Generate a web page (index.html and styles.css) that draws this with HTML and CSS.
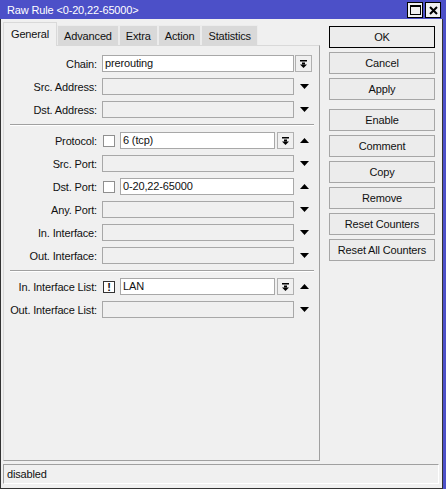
FILE: index.html
```html
<!DOCTYPE html>
<html lang="en">
<head>
    <meta charset="UTF-8">
    <title>Raw Rule</title>
    <link rel="stylesheet" href="styles.css">
</head>
<body>

    <div class="window">
        <!-- Title bar -->
        <div class="titlebar">
            <span class="title">Raw Rule &lt;0-20,22-65000&gt;</span>
            <div class="caption">
                <span class="cap-btn">
                    <svg width="11" height="10" viewBox="0 0 11 10"><rect x="0.5" y="0.5" width="10" height="9" fill="none" stroke="#000"/><rect x="0" y="0" width="11" height="2" fill="#000"/></svg>
                </span>
                <span class="cap-btn">
                    <svg width="9" height="9" viewBox="0 0 9 9"><path d="M1 1 L8 8 M8 1 L1 8" stroke="#000" stroke-width="2"/></svg>
                </span>
            </div>
        </div>

        <div class="frame">
            <div class="main">
                <div class="editor">
                    <div class="tabs">
                        <span class="tab active">General</span>
                        <span class="tab">Advanced</span>
                        <span class="tab">Extra</span>
                        <span class="tab">Action</span>
                        <span class="tab">Statistics</span>
                    </div>

                    <div class="panel">
                        <div class="group">
                            <div class="row">
                                <label>Chain:</label>
                                <div class="field"><span class="input filled">prerouting</span></div>
                                <div class="tail"><span class="drop"><svg width="7" height="8" viewBox="0 0 7 8"><rect width="7" height="1.5"/><rect x="2" y="2.5" width="3" height="2"/><polygon points="0,4.5 7,4.5 3.5,8"/></svg></span></div>
                            </div>
                            <div class="row">
                                <label>Src. Address:</label>
                                <div class="field"><span class="input"></span></div>
                                <div class="tail"><svg class="arrow" width="9" height="5" viewBox="0 0 9 5"><polygon points="0,0 9,0 4.5,5"/></svg></div>
                            </div>
                            <div class="row">
                                <label>Dst. Address:</label>
                                <div class="field"><span class="input"></span></div>
                                <div class="tail"><svg class="arrow" width="9" height="5" viewBox="0 0 9 5"><polygon points="0,0 9,0 4.5,5"/></svg></div>
                            </div>
                        </div>

                        <div class="sep"></div>

                        <div class="group">
                            <div class="row">
                                <label>Protocol:</label>
                                <div class="field">
                                    <span class="check"></span>
                                    <span class="input filled">6 (tcp)</span>
                                    <span class="drop inner"><svg width="7" height="8" viewBox="0 0 7 8"><rect width="7" height="1.5"/><rect x="2" y="2.5" width="3" height="2"/><polygon points="0,4.5 7,4.5 3.5,8"/></svg></span>
                                </div>
                                <div class="tail"><svg class="arrow" width="9" height="5" viewBox="0 0 9 5"><polygon points="0,5 9,5 4.5,0"/></svg></div>
                            </div>
                            <div class="row">
                                <label>Src. Port:</label>
                                <div class="field"><span class="input"></span></div>
                                <div class="tail"><svg class="arrow" width="9" height="5" viewBox="0 0 9 5"><polygon points="0,0 9,0 4.5,5"/></svg></div>
                            </div>
                            <div class="row">
                                <label>Dst. Port:</label>
                                <div class="field">
                                    <span class="check"></span>
                                    <span class="input filled">0-20,22-65000</span>
                                </div>
                                <div class="tail"><svg class="arrow" width="9" height="5" viewBox="0 0 9 5"><polygon points="0,5 9,5 4.5,0"/></svg></div>
                            </div>
                            <div class="row">
                                <label>Any. Port:</label>
                                <div class="field"><span class="input"></span></div>
                                <div class="tail"><svg class="arrow" width="9" height="5" viewBox="0 0 9 5"><polygon points="0,0 9,0 4.5,5"/></svg></div>
                            </div>
                            <div class="row">
                                <label>In. Interface:</label>
                                <div class="field"><span class="input"></span></div>
                                <div class="tail"><svg class="arrow" width="9" height="5" viewBox="0 0 9 5"><polygon points="0,0 9,0 4.5,5"/></svg></div>
                            </div>
                            <div class="row">
                                <label>Out. Interface:</label>
                                <div class="field"><span class="input"></span></div>
                                <div class="tail"><svg class="arrow" width="9" height="5" viewBox="0 0 9 5"><polygon points="0,0 9,0 4.5,5"/></svg></div>
                            </div>
                        </div>

                        <div class="sep"></div>

                        <div class="group">
                            <div class="row">
                                <label>In. Interface List:</label>
                                <div class="field">
                                    <span class="check not">!</span>
                                    <span class="input filled">LAN</span>
                                    <span class="drop inner"><svg width="7" height="8" viewBox="0 0 7 8"><rect width="7" height="1.5"/><rect x="2" y="2.5" width="3" height="2"/><polygon points="0,4.5 7,4.5 3.5,8"/></svg></span>
                                </div>
                                <div class="tail"><svg class="arrow" width="9" height="5" viewBox="0 0 9 5"><polygon points="0,5 9,5 4.5,0"/></svg></div>
                            </div>
                            <div class="row">
                                <label>Out. Interface List:</label>
                                <div class="field"><span class="input"></span></div>
                                <div class="tail"><svg class="arrow" width="9" height="5" viewBox="0 0 9 5"><polygon points="0,0 9,0 4.5,5"/></svg></div>
                            </div>
                        </div>
                    </div>
                </div>

                <!-- Dialog buttons -->
                <div class="actions">
                    <button class="default">OK</button>
                    <button>Cancel</button>
                    <button class="last">Apply</button>
                    <button>Enable</button>
                    <button>Comment</button>
                    <button>Copy</button>
                    <button>Remove</button>
                    <button>Reset Counters</button>
                    <button>Reset All Counters</button>
                </div>
            </div>

            <div class="status">disabled</div>
        </div>
    </div>

</body>
</html>
```

FILE: styles.css
```css
body {
    margin: 0;
    font-family: "Liberation Sans", Arial, sans-serif;
    font-size: 11px;
    letter-spacing: -0.15px;
    color: #111;
    background-color: #f0f0f0;
}

.window {
    width: 446px;
    height: 489px;
    background-color: #4c50c8;
}

/* Title bar */
.titlebar {
    height: 19px;
    display: flex;
    align-items: center;
    justify-content: space-between;
    padding: 0 5px 0 7px;
    box-sizing: border-box;
}

.title {
    color: #fff;
    font-size: 11px;
    margin-top: 1px;
}

.caption {
    display: flex;
    gap: 2px;
    margin-top: 1px;
}

.cap-btn {
    width: 14px;
    height: 14px;
    border: 1px solid #000;
    background-color: #f0f0f0;
    display: flex;
    align-items: center;
    justify-content: center;
}

/* Window body */
.frame {
    width: 443px;
    height: 470px;
    box-sizing: border-box;
    border: 1px solid #333;
    border-top: none;
    background-color: #f0f0f0;
}

.main {
    display: flex;
    padding-top: 2px;
}

.editor {
    margin-left: 2px;
    width: 317px;
}

/* Tabs */
.tabs {
    display: flex;
    align-items: flex-end;
    height: 24px;
}

.tab {
    height: 20px;
    line-height: 20px;
    box-sizing: border-box;
    padding: 0 6px;
    background-color: #d9d9d9;
    border: 1px solid #ececec;
    border-bottom: none;
}

.tab.active {
    height: 24px;
    line-height: 23px;
    padding: 0 7px;
    margin-bottom: -1px;
    position: relative;
    background-color: #f0f0f0;
    border: 1px solid #d9d9d9;
    border-bottom: none;
}

/* Form panel */
.panel {
    height: 416px;
    box-sizing: border-box;
    border: 1px solid #d9d9d9;
    border-right-color: #a0a0a0;
    border-bottom-color: #a0a0a0;
    padding-top: 9px;
}

.group {
    display: flex;
    flex-direction: column;
    gap: 6px;
}

.sep {
    margin: 6px 5px 6px 6px;
    border-top: 1px solid #a0a0a0;
    border-bottom: 1px solid #fff;
}

.row {
    display: flex;
    align-items: center;
    height: 17px;
}

.row label {
    width: 94px;
    text-align: right;
    padding-right: 1px;
    box-sizing: border-box;
    white-space: nowrap;
}

.field {
    display: flex;
    align-items: center;
    width: 192px;
    margin-left: 4px;
}

.input {
    flex: 1;
    height: 17px;
    line-height: 15px;
    box-sizing: border-box;
    padding-left: 2px;
    border: 1px solid #a8a8a8;
    background-color: #f0f0f0;
}

.input.filled {
    background-color: #fff;
}

.check {
    width: 12px;
    height: 12px;
    box-sizing: border-box;
    margin: 0 5px 0 1px;
    border: 1px solid #8f8f8f;
    background-color: #fff;
    font-weight: bold;
    font-size: 11px;
    line-height: 10px;
    text-align: center;
}

.check.not {
    border-color: #333;
}

.drop {
    width: 17px;
    height: 17px;
    box-sizing: border-box;
    border: 1px solid #b0b0b0;
    background-color: #f0f0f0;
    display: flex;
    align-items: center;
    justify-content: center;
}

.drop.inner {
    margin-left: 2px;
}

.tail {
    width: 20px;
    display: flex;
    align-items: center;
    justify-content: center;
}

.tail .drop {
    margin-right: 2px;
}

/* Right hand buttons */
.actions {
    margin: 5px 0 0 9px;
    width: 106px;
    display: flex;
    flex-direction: column;
    gap: 4px;
}

.actions button {
    height: 22px;
    padding: 0;
    font-family: inherit;
    font-size: 11px;
    letter-spacing: inherit;
    color: #111;
    background-color: #ececec;
    border: 1px solid #a6a6a6;
}

.actions button.default {
    border-color: #000;
}

.actions button.last {
    margin-bottom: 5px;
}

/* Status bar */
.status {
    margin: 3px 0 0 2px;
    width: 436px;
    height: 20px;
    box-sizing: border-box;
    padding-left: 3px;
    line-height: 18px;
    border: 1px solid #fff;
    border-top-color: #a0a0a0;
    border-left-color: #a0a0a0;
}
```
